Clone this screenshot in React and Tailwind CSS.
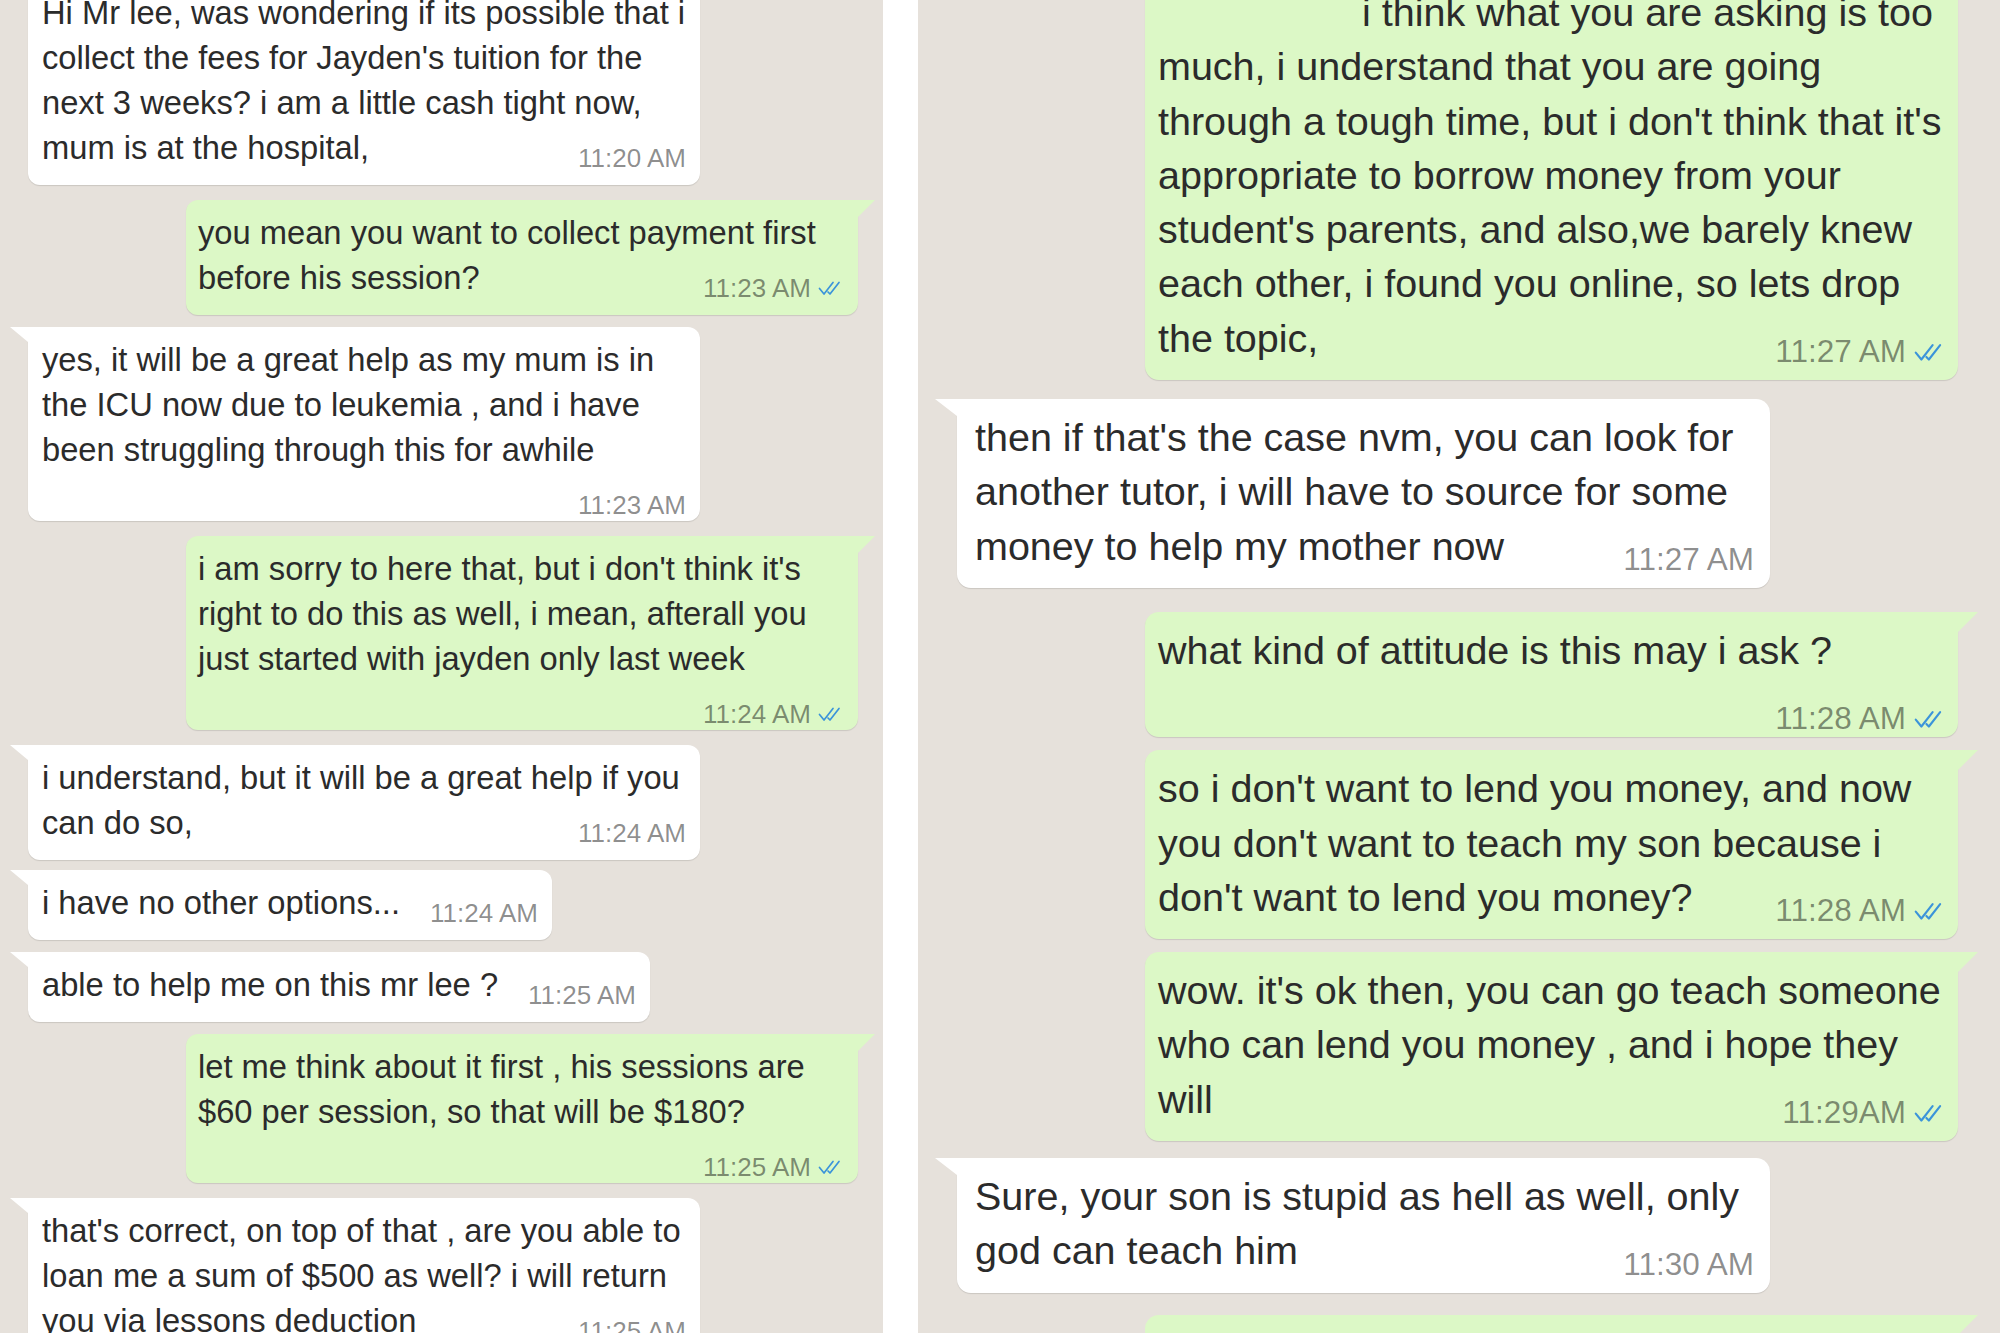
import clsx from 'clsx';

// two screenshots of the same chat, side by side (right one is zoomed ~1.21x)
const LEFT = {
  panel: 'w-[883px] pl-[28px] pr-[25px]',
  text: 'text-[32.7px] leading-[45px]',
  time: 'text-[26px] leading-[26px]',
  timeShift: 'translate-y-[1px]',
  wide: 'w-[672px]',
  pt: 'pt-[10px]',
  pbInline: 'pb-[15px]',
  pbRow: 'pb-[3px]',
  timeRow: 'mt-[20px] h-[26px]',
  padIn: 'pl-[14px] pr-[14px]',
  padOut: 'pl-[12px] pr-[13px]',
  gap: 'gap-[30px]',
  radius: 'rounded-[12px]',
  tick: 'w-[29px] h-[16px] ml-[5px]',
  tailIn: 'w-[18px] h-[15px] -left-[18px]',
  tailOut: 'w-[17px] h-[17px] -right-[17px]',
};

const RIGHT = {
  panel: 'flex-1 pl-[39px] pr-[42px]',
  text: 'text-[39.5px] leading-[54.3px]',
  time: 'text-[31.5px] leading-[31px]',
  timeShift: 'translate-y-[2px]',
  wide: 'w-[813px]',
  pt: 'pt-[11px]',
  pbInline: 'pb-[15px]',
  pbRow: 'pb-[3px]',
  timeRow: 'mt-[26px] h-[31px]',
  padIn: 'pl-[18px] pr-[16px]',
  padOut: 'pl-[13px] pr-[11px]',
  gap: 'gap-[36px]',
  radius: 'rounded-[14px]',
  tick: 'w-[35px] h-[20px] ml-[6px]',
  tailIn: 'w-[22px] h-[17px] -left-[22px]',
  tailOut: 'w-[20px] h-[20px] -right-[20px]',
};

const leftMsgs = [
  {
    mt: '-mt-[20px]',
    wide: true,
    lines: [
      'Hi Mr lee, was wondering if its possible that i',
      "collect the fees for Jayden's tuition for the",
      'next 3 weeks? i am a little cash tight now,',
      'mum is at the hospital,',
    ],
    time: '11:20 AM',
  },
  {
    mt: 'mt-[15px]',
    out: true,
    wide: true,
    lines: ['you mean you want to collect payment first', 'before his session?'],
    time: '11:23 AM',
  },
  {
    mt: 'mt-[12px]',
    wide: true,
    timeRow: true,
    lines: [
      'yes, it will be a great help as my mum is in',
      'the ICU now due to leukemia , and i have',
      'been struggling through this for awhile',
    ],
    time: '11:23 AM',
  },
  {
    mt: 'mt-[15px]',
    out: true,
    wide: true,
    timeRow: true,
    lines: [
      "i am sorry to here that, but i don't think it's",
      'right to do this as well, i mean, afterall you',
      'just started with jayden only last week',
    ],
    time: '11:24 AM',
  },
  {
    mt: 'mt-[15px]',
    wide: true,
    lines: ['i understand, but it will be a great help if you', 'can do so,'],
    time: '11:24 AM',
  },
  { mt: 'mt-[10px]', lines: ['i have no other options...'], time: '11:24 AM' },
  { mt: 'mt-[12px]', lines: ['able to help me on this mr lee ?'], time: '11:25 AM' },
  {
    mt: 'mt-[12px]',
    out: true,
    wide: true,
    timeRow: true,
    lines: ['let me think about it first , his sessions are', '$60 per session, so that will be $180?'],
    time: '11:25 AM',
  },
  {
    mt: 'mt-[15px]',
    wide: true,
    lines: [
      "that's correct, on top of that , are you able to",
      'loan me a sum of $500 as well? i will return',
      'you via lessons deduction',
    ],
    time: '11:25 AM',
  },
];

const rightMsgs = [
  {
    mt: '-mt-[26px]',
    out: true,
    wide: true,
    indent: true,
    lines: [
      'i think what you are asking is too',
      'much, i understand that you are going',
      "through a tough time, but i don't think that it's",
      'appropriate to borrow money from your',
      "student's parents, and also,we barely knew",
      'each other, i found you online, so lets drop',
      'the topic,',
    ],
    time: '11:27 AM',
  },
  {
    mt: 'mt-[19px]',
    wide: true,
    lines: [
      "then if that's the case nvm, you can look for",
      'another tutor, i will have to source for some',
      'money to help my mother now',
    ],
    time: '11:27 AM',
  },
  {
    mt: 'mt-[24px]',
    out: true,
    wide: true,
    timeRow: true,
    lines: ['what kind of attitude is this may i ask ?'],
    time: '11:28 AM',
  },
  {
    mt: 'mt-[13px]',
    out: true,
    wide: true,
    lines: [
      "so i don't want to lend you money, and now",
      "you don't want to teach my son because i",
      "don't want to lend you money?",
    ],
    time: '11:28 AM',
  },
  {
    mt: 'mt-[13px]',
    out: true,
    wide: true,
    lines: [
      "wow. it's ok then, you can go teach someone",
      'who can lend you money , and i hope they',
      'will',
    ],
    time: '11:29AM',
  },
  {
    mt: 'mt-[17px]',
    wide: true,
    lines: ['Sure, your son is stupid as hell as well, only', 'god can teach him'],
    time: '11:30 AM',
  },
];

function Ticks({ className }) {
  return (
    <svg viewBox="0 0 26 16" className={className} fill="none" stroke="#3b94da" strokeWidth="1.7" strokeLinecap="round" strokeLinejoin="round">
      <path d="M2 8.5 L6.5 14 L15.5 2.5" />
      <path d="M10.5 12 L12.5 14 L21.5 2.5" />
    </svg>
  );
}

function Tail({ out, s }) {
  const fill = out ? '#dcf8c6' : '#ffffff';
  return (
    <svg
      viewBox="0 0 20 20"
      preserveAspectRatio="none"
      className={clsx('absolute top-0', out ? s.tailOut : s.tailIn)}
    >
      {out ? <polygon points="0,0 20,0 0,20" fill={fill} /> : <polygon points="0,0 20,0 20,20" fill={fill} />}
    </svg>
  );
}

function Time({ m, s }) {
  return (
    <span className={clsx('flex shrink-0 items-center whitespace-nowrap text-black/45', s.time)}>
      {m.time}
      {m.out && <Ticks className={s.tick} />}
    </span>
  );
}

function Bubble({ m, s }) {
  const body = m.lines.slice(0, -1);
  const last = m.lines[m.lines.length - 1];
  return (
    <div
      className={clsx(
        'relative shrink-0 shadow-[0_1px_1px_rgba(0,0,0,0.12)]',
        s.radius,
        m.out ? 'self-end rounded-tr-none bg-[#dcf8c6]' : 'self-start rounded-tl-none bg-white',
        m.mt,
        m.wide && s.wide,
        s.pt,
        m.timeRow ? s.pbRow : s.pbInline,
        m.out ? s.padOut : s.padIn
      )}
    >
      <Tail out={m.out} s={s} />
      {body.map((line, i) => (
        <div key={i} className={clsx('whitespace-nowrap', m.indent && i === 0 && 'pl-[204px]')}>
          {line}
        </div>
      ))}
      {m.timeRow ? (
        <>
          <div className="whitespace-nowrap">{last}</div>
          <div className={clsx('flex items-center justify-end', s.timeRow)}>
            <Time m={m} s={s} />
          </div>
        </>
      ) : (
        <div className={clsx('flex items-end', m.wide ? 'justify-between' : s.gap)}>
          <span className="whitespace-nowrap">{last}</span>
          <span className={s.timeShift}>
            <Time m={m} s={s} />
          </span>
        </div>
      )}
    </div>
  );
}

function Panel({ msgs, s, children }) {
  return (
    <div className={clsx('flex h-full flex-col overflow-hidden bg-[#e6e1db] text-[#2b2b2b]', s.panel, s.text)}>
      {msgs.map((m, i) => (
        <Bubble key={i} m={m} s={s} />
      ))}
      {children}
    </div>
  );
}

export default function App() {
  return (
    <div className="flex h-[1333px] w-[2000px] overflow-hidden bg-white font-['Liberation_Sans',Arial,sans-serif]">
      <Panel msgs={leftMsgs} s={LEFT} />
      <div className="w-[35px] shrink-0 bg-white" />
      <Panel msgs={rightMsgs} s={RIGHT}>
        <div className="relative mt-[22px] h-[120px] w-[813px] shrink-0 self-end rounded-[14px] rounded-tr-none bg-[#dcf8c6]">
          <Tail out s={RIGHT} />
        </div>
      </Panel>
    </div>
  );
}
